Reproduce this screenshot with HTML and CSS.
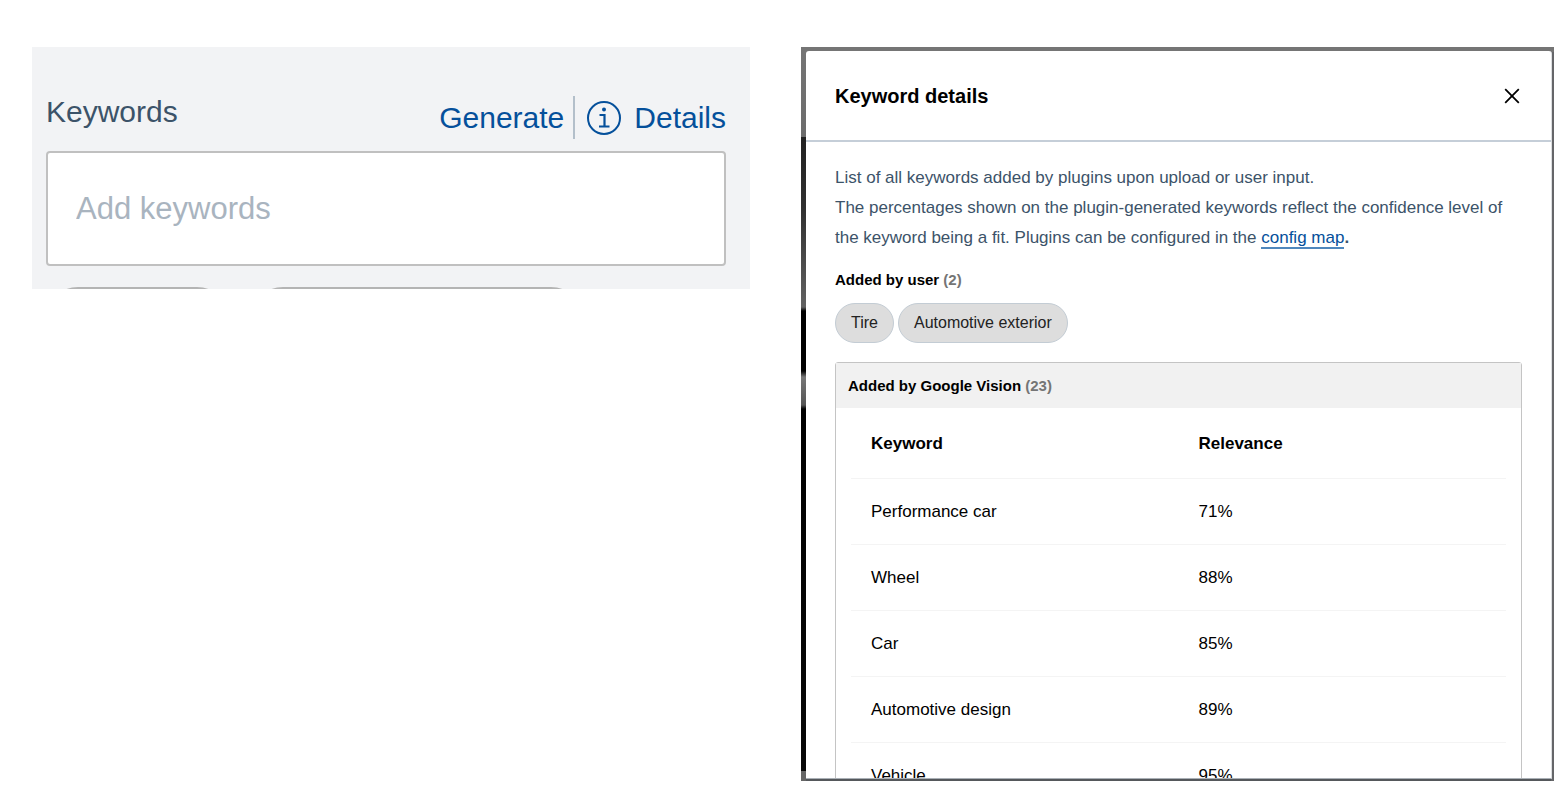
FILE: index.html
```html
<!DOCTYPE html>
<html lang="en">
<head>
<meta charset="utf-8">
<title>Keywords</title>
<link rel="stylesheet" href="styles.css">
</head>
<body>
<main class="page">
  <section class="editor">
    <div class="editor-head">
      <label class="editor-label" for="keywords">Keywords</label>
      <div class="actions">
        <button class="action" type="button">Generate</button>
        <button class="action action-details" type="button">
          <svg class="info-icon" viewBox="0 0 36 36" aria-hidden="true">
            <circle cx="18" cy="18" r="16" fill="none" stroke="currentColor" stroke-width="2"/>
            <circle cx="18" cy="9.500" r="2" fill="currentColor"/>
            <path d="M13.500 15H18.500V26.500M13 26.500H23.500" fill="none" stroke="currentColor" stroke-width="2.200"/>
          </svg>
          Details
        </button>
      </div>
    </div>
    <input class="keyword-input" id="keywords" type="text" placeholder="Add keywords">
    <div class="tag-row"><span class="tag"></span><span class="tag tag-wide"></span></div>
  </section>

  <section class="backdrop">
    <div class="modal" role="dialog" aria-labelledby="modal-title">
      <header class="modal-head">
        <h1 class="modal-title" id="modal-title">Keyword details</h1>
        <button class="close" type="button" aria-label="Close">
          <svg class="close-icon" viewBox="0 0 16 16" aria-hidden="true"><path d="M1.200 1.200L14.800 14.800M14.800 1.200L1.200 14.800" fill="none" stroke="currentColor" stroke-width="1.800"/></svg>
        </button>
      </header>
      <div class="modal-body">
        <p class="intro">List of all keywords added by plugins upon upload or user input.<br>The percentages shown on the plugin-generated keywords reflect the confidence level of the keyword being a fit. Plugins can be configured in the <a class="link" href="#">config map</a><b>.</b></p>
        <h2 class="group-title">Added by user <span class="count">(2)</span></h2>
        <div class="chips"><span class="chip">Tire</span><span class="chip">Automotive exterior</span></div>
        <section class="card">
          <h2 class="group-title card-head">Added by Google Vision <span class="count">(23)</span></h2>
          <div class="card-body">
            <table class="table">
              <thead><tr><th scope="col">Keyword</th><th scope="col">Relevance</th></tr></thead>
              <tbody>
                <tr><td>Performance car</td><td>71%</td></tr>
                <tr><td>Wheel</td><td>88%</td></tr>
                <tr><td>Car</td><td>85%</td></tr>
                <tr><td>Automotive design</td><td>89%</td></tr>
                <tr><td>Vehicle</td><td>95%</td></tr>
              </tbody>
            </table>
          </div>
        </section>
      </div>
    </div>
  </section>
</main>
</body>
</html>
```

FILE: styles.css
```css
* { box-sizing: border-box; }

body {
  margin: 0;
  background: #fff;
  font-family: "Liberation Sans", Arial, sans-serif;
  color: #000;
}

button {
  border: 0;
  padding: 0;
  background: none;
  font: inherit;
  cursor: pointer;
}

.page {
  display: grid;
  grid-template-columns: 718fr 753fr;
  grid-template-rows: minmax(0, 1fr);
  gap: 51px;
  align-items: start;
  height: 100vh;
  padding: 47px 12px 10px 32px;
}

.editor {
  padding: 49px 24px 0 14px;
  background: #f2f3f5;
  overflow: hidden;
}

.editor-head {
  display: flex;
  justify-content: space-between;
  align-items: flex-start;
  height: 55px;
}

.editor-label {
  font-size: 30px;
  line-height: 32px;
  color: #3c5369;
}

.actions { display: flex; color: #05509b; }

.action {
  display: flex;
  align-items: center;
  height: 43px;
  font-size: 30px;
  color: #05509b;
}

.action-details {
  gap: 12px;
  margin-left: 9px;
  padding-left: 11px;
  border-left: 2px solid #b3bfca;
}

.info-icon { width: 36px; height: 36px; }

.keyword-input {
  display: block;
  width: 100%;
  height: 115px;
  padding: 0 28px;
  border: 2px solid #c0c0c0;
  border-radius: 4px;
  background: #fff;
  font: inherit;
  font-size: 31px;
  color: #3c5369;
}

.keyword-input::placeholder { color: #a9b4bf; opacity: 1; }

.tag-row {
  display: flex;
  gap: 22px;
  height: 23px;
  padding-top: 21px;
}

.tag {
  flex: none;
  width: 183px;
  height: 64px;
  border: 2px solid #b4b4b4;
  border-radius: 32px;
  background: #ddd;
}

.tag-wide { width: 332px; }

.backdrop {
  height: 100%;
  padding: 4px 2px 2px 5px;
  background:
    linear-gradient(#757575, #757575) top right / calc(100% - 5px) 5px no-repeat,
    linear-gradient(#656669, #656669) top right / 3px 100% no-repeat,
    linear-gradient(#55585b, #55585b) bottom right / calc(100% - 5px) 4px no-repeat,
    linear-gradient(#757575 0, #6c6c6c 90px, #222 90px, #303030 160px, #626262 260px, #000 264px, #000 324px, #777 330px, #555 358px, #000 362px, #080808 724px, #666 724px);
}

.modal {
  display: flex;
  flex-direction: column;
  height: 100%;
  border-right: 1px solid #dcdee0;
  border-bottom: 1px solid #aab0b6;
  border-radius: 3px 3px 0 0;
  background: #fff;
  overflow: hidden;
}

.modal-head {
  display: flex;
  flex: none;
  justify-content: space-between;
  align-items: center;
  height: 91px;
  padding: 0 30px 0 29px;
  border-bottom: 2px solid #c5ced8;
}

.modal-title { margin: 0; font-size: 20px; line-height: 24px; }

.close {
  display: flex;
  align-items: center;
  justify-content: center;
  width: 18px;
  height: 18px;
  color: #000;
}

.close-icon { width: 16px; height: 16px; }

.modal-body {
  flex: 1;
  min-height: 0;
  padding: 21px 29px 0;
  overflow: hidden;
}

.intro {
  margin: 0 0 17px;
  font-size: 17px;
  line-height: 30px;
  color: #3c5369;
}

.link {
  border-bottom: 2px solid #4f87bd;
  color: #05509b;
  text-decoration: none;
}

.group-title { margin: 0; font-size: 15px; line-height: 20px; }

.count { color: #757575; }

.chips {
  display: flex;
  gap: 4px;
  margin: 13px 0 19px;
}

.chip {
  padding: 0 15px;
  border: 1px solid #c3ccd4;
  border-radius: 20px;
  background: #ddd;
  font-size: 16px;
  line-height: 38px;
  color: #222;
}

.card {
  border: 1px solid #c4c4c4;
  border-radius: 3px;
}

.card-head {
  padding: 13px 12px 12px;
  background: #f1f1f1;
}

.card-body { padding: 0 15px; }

.table {
  width: 100%;
  border-collapse: collapse;
  table-layout: fixed;
  font-size: 17px;
}

.table th,
.table td {
  height: 66px;
  padding: 2px 20px 0;
  border-bottom: 1px solid #f4f4f4;
  text-align: left;
}

.table th { height: 70px; }
```
